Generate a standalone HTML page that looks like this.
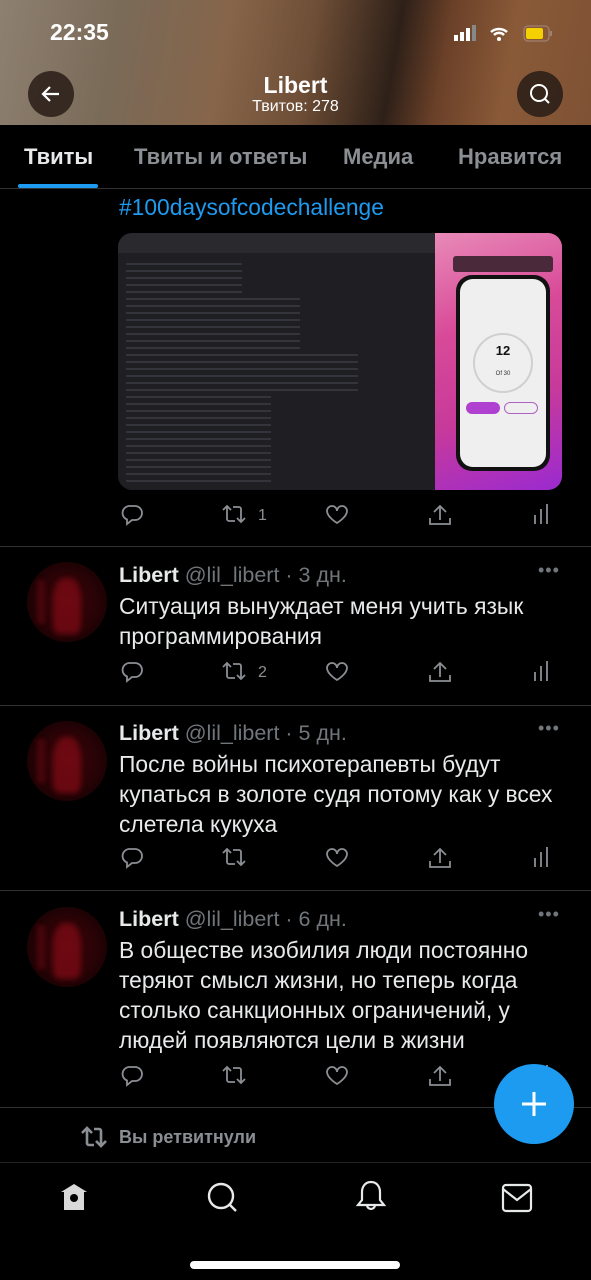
<!DOCTYPE html>
<html><head><meta charset="utf-8">
<style>
*{margin:0;padding:0;box-sizing:border-box}
body{width:591px;height:1280px;background:#000;overflow:hidden;position:relative;font-family:"Liberation Sans","DejaVu Sans",sans-serif;color:#e7e9ea}
.a{position:absolute}
.hdr{left:0;top:0;width:591px;height:125px;background:linear-gradient(100deg,#8e8070 0%,#7a6a58 20%,#86654a 38%,#6e4e36 52%,#2e2018 66%,#6a4028 74%,#8a5a38 85%,#7e5234 100%)}
.circ{width:46px;height:46px;border-radius:50%;background:rgba(40,28,22,.85)}
.tab{top:144px;font-size:22px;font-weight:bold;color:#8b8f94}
.sep{left:0;width:591px;height:1px;background:#2f3336}
.av{left:27px;width:80px;height:80px;border-radius:50%;background:radial-gradient(circle at 50% 50%,#3a0508 0%,#2a0306 50%,#140102 85%,#0a0001 100%);overflow:hidden}
.av:after{content:"";position:absolute;left:26px;top:16px;width:28px;height:56px;border-radius:40% 40% 20% 20%;background:#7a0a14;opacity:.8;filter:blur(3px)}
.av:before{content:"";position:absolute;left:10px;top:18px;width:8px;height:44px;background:#5a0810;opacity:.6;filter:blur(2px)}
.nm{left:119px;font-size:21.5px;white-space:nowrap}
.nm b{color:#e7e9ea}
.nm span{color:#71767b}
.tx{left:119px;font-size:22.8px;line-height:30px;color:#e7e9ea;white-space:nowrap}
.dots{left:538px;font-size:18px;color:#71767b;letter-spacing:1px}
.ic{stroke:#8b8f94;fill:none;stroke-width:1.8}
.cnt{font-size:16px;color:#8b8f94}
</style></head><body>
<div class="a hdr"></div>
<div class="a" style="left:50px;top:19px;font-size:23px;font-weight:bold;color:#fff">22:35</div>
<svg class="a" style="left:454px;top:24px" width="100" height="20">
<rect x="0" y="11" width="4" height="6" fill="#fff"/><rect x="6" y="8" width="4" height="9" fill="#fff"/><rect x="12" y="4" width="4" height="13" fill="#fff"/><rect x="18" y="1" width="4" height="16" fill="#888"/>
<path d="M37 8 a12 12 0 0 1 16 0" stroke="#fff" stroke-width="2.5" fill="none"/><path d="M40 11 a7 7 0 0 1 10 0" stroke="#fff" stroke-width="2.5" fill="none"/><circle cx="45" cy="15" r="2" fill="#fff"/>
<rect x="70" y="2" width="25" height="15" rx="4" stroke="#a08070" fill="none" stroke-width="1.3"/><rect x="72" y="4" width="17" height="11" rx="2" fill="#f5d000"/><rect x="96" y="7" width="2" height="5" fill="#a08070"/>
</svg>
<div class="a circ" style="left:28px;top:71px"></div>
<svg class="a" style="left:40px;top:83px" width="22" height="22"><path d="M19 11H4M10 4L3 11l7 7" stroke="#fff" stroke-width="2.2" fill="none"/></svg>
<div class="a circ" style="left:517px;top:71px"></div>
<svg class="a" style="left:528px;top:82px" width="24" height="24"><circle cx="11" cy="11" r="8" stroke="#fff" stroke-width="2" fill="none"/><path d="M17 17l4 4" stroke="#fff" stroke-width="2"/></svg>
<div class="a" style="left:0;width:591px;top:72px;text-align:center;font-size:23px;font-weight:bold;color:#fff">Libert</div>
<div class="a" style="left:0;width:591px;top:98px;text-align:center;font-size:16px;color:#fff">Твитов: 278</div>

<div class="a tab" style="left:24px;color:#e7e9ea">Твиты</div>
<div class="a tab" style="left:134px">Твиты и ответы</div>
<div class="a tab" style="left:343px">Медиа</div>
<div class="a tab" style="left:458px">Нравится</div>
<div class="a" style="left:18px;top:184px;width:80px;height:4px;border-radius:2px;background:#1d9bf0"></div>
<div class="a sep" style="top:188px"></div>

<div class="a" style="left:119px;top:194px;font-size:22.8px;color:#1d9bf0">#100daysofcodechallenge</div>
<div class="a" style="left:118px;top:233px;width:444px;height:257px;border-radius:14px;overflow:hidden;background:#1f1f23">
 <div class="a" style="left:0;top:0;width:317px;height:20px;background:#2a2a2e"></div>
 <div class="a" style="left:8px;top:30px;width:290px;height:220px;background:repeating-linear-gradient(180deg,rgba(150,150,170,.18) 0 2px,transparent 2px 7px);clip-path:polygon(0 0,40% 0,40% 15%,60% 15%,60% 40%,80% 40%,80% 60%,50% 60%,50% 100%,0 100%)"></div>
 <div class="a" style="left:317px;top:0;width:127px;height:257px;background:linear-gradient(160deg,#e88ab8 0%,#d84a98 35%,#c83a9a 65%,#9a2ad0 100%)"></div>
 <div class="a" style="left:335px;top:23px;width:100px;height:16px;border-radius:3px;background:#4a2a3a"></div>
 <div class="a" style="left:338px;top:42px;width:94px;height:196px;border-radius:16px;background:#111"></div>
 <div class="a" style="left:342px;top:46px;width:86px;height:188px;border-radius:13px;background:#efefef"></div>
 <div class="a" style="left:355px;top:100px;width:60px;height:60px;border-radius:50%;border:2px solid #d0d0d0"></div>
 <div class="a" style="left:355px;top:110px;width:60px;text-align:center;font-size:13px;font-weight:bold;color:#111">12</div>
 <div class="a" style="left:355px;top:138px;width:60px;text-align:center;font-size:6px;color:#333">Of 30</div>
 <div class="a" style="left:348px;top:169px;width:34px;height:12px;border-radius:6px;background:#b040d0"></div>
 <div class="a" style="left:386px;top:169px;width:34px;height:12px;border-radius:6px;border:1px solid #b060c0"></div>
</div>

<svg width="0" height="0" style="position:absolute"><defs>
<g id="acts">
<path class="ic" d="M8 2h6a7 7 0 0 1 0 14h-3l-5 4v-4.5A7 7 0 0 1 8 2z" transform="translate(2,1)"/>
<g transform="translate(102,1)"><path class="ic" d="M2 6l4-4 4 4M6 2v13a2 2 0 0 0 2 2h6M24 14l-4 4-4-4M20 18V5a2 2 0 0 0-2-2h-6"/></g>
<path class="ic" d="M217 6a5 5 0 0 1 10 0c0 6-10 12-10 12s-10-6-10-12a5 5 0 0 1 10 0z" transform="translate(1,2)"/>
<g transform="translate(310,0)"><path class="ic" d="M11 3v14M5 9l6-6 6 6M1 15v6h20v-6"/></g>
<g transform="translate(414,0)"><path class="ic" d="M2 12v9M8 6v15M14 1v20" stroke-width="2"/></g>
</g></defs></svg>

<svg class="a" style="left:119px;top:503px" width="440" height="26"><use href="#acts"/></svg>
<div class="a cnt" style="left:258px;top:507px">1</div>
<div class="a sep" style="top:546px"></div>

<div class="a av" style="top:562px"></div>
<div class="a nm" style="top:563px"><b>Libert</b> <span>@lil_libert · 3 дн.</span></div>
<div class="a dots" style="top:560px">•••</div>
<div class="a tx" style="top:591px">Ситуация вынуждает меня учить язык<br>программирования</div>
<svg class="a" style="left:119px;top:660px" width="440" height="26"><use href="#acts"/></svg>
<div class="a cnt" style="left:258px;top:664px">2</div>
<div class="a sep" style="top:705px"></div>

<div class="a av" style="top:721px"></div>
<div class="a nm" style="top:721px"><b>Libert</b> <span>@lil_libert · 5 дн.</span></div>
<div class="a dots" style="top:718px">•••</div>
<div class="a tx" style="top:749px">После войны психотерапевты будут<br>купаться в золоте судя потому как у всех<br>слетела кукуха</div>
<svg class="a" style="left:119px;top:846px" width="440" height="26"><use href="#acts"/></svg>
<div class="a sep" style="top:890px"></div>

<div class="a av" style="top:907px"></div>
<div class="a nm" style="top:907px"><b>Libert</b> <span>@lil_libert · 6 дн.</span></div>
<div class="a dots" style="top:904px">•••</div>
<div class="a tx" style="top:935px">В обществе изобилия люди постоянно<br>теряют смысл жизни, но теперь когда<br>столько санкционных ограничений, у<br>людей появляются цели в жизни</div>
<svg class="a" style="left:119px;top:1064px" width="440" height="26"><use href="#acts"/></svg>
<div class="a sep" style="top:1107px"></div>

<svg class="a" style="left:79px;top:1125px" width="30" height="24"><path d="M3 8l5-5 5 5M8 3v15a2 2 0 0 0 2 2h5M27 16l-5 5-5-5M22 21V6a2 2 0 0 0-2-2h-5" stroke="#8b8f94" stroke-width="2.6" fill="none"/></svg>
<div class="a" style="left:119px;top:1127px;font-size:18px;font-weight:bold;color:#8b8f94">Вы ретвитнули</div>

<div class="a" style="left:494px;top:1064px;width:80px;height:80px;border-radius:50%;background:#1d9bf0"></div>
<svg class="a" style="left:519px;top:1089px" width="30" height="30"><path d="M15 3v24M3 15h24" stroke="#fff" stroke-width="3"/></svg>

<div class="a" style="left:0;top:1162px;width:591px;height:118px;background:#000;border-top:1px solid #1f2326"></div>
<svg class="a" style="left:57px;top:1181px" width="34" height="34"><path d="M4 11L17 3l13 8h-3v18H7V11z" fill="#d9d9d9"/><circle cx="17" cy="17" r="4" fill="#000"/></svg>
<svg class="a" style="left:205px;top:1180px" width="36" height="36"><circle cx="16" cy="16" r="12" stroke="#e7e9ea" stroke-width="2.4" fill="none"/><path d="M25 25l6 6" stroke="#e7e9ea" stroke-width="2.4"/></svg>
<svg class="a" style="left:354px;top:1179px" width="34" height="36"><path d="M17 3c-6 0-9 5-9 10v8l-4 5h26l-4-5v-8c0-5-3-10-9-10zM13 26a4 4 0 0 0 8 0" stroke="#e7e9ea" stroke-width="2.2" fill="none"/></svg>
<svg class="a" style="left:501px;top:1183px" width="34" height="30"><rect x="2" y="2" width="28" height="26" rx="3" stroke="#e7e9ea" stroke-width="2.2" fill="none"/><path d="M2 6l14 11 14-11" stroke="#e7e9ea" stroke-width="2.2" fill="none"/></svg>
<div class="a" style="left:190px;top:1261px;width:210px;height:8px;border-radius:4px;background:#fff"></div>
</body></html>
